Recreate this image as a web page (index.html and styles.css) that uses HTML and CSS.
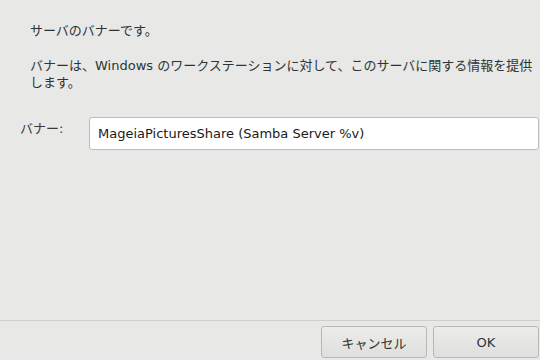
FILE: index.html
```html
<!DOCTYPE html>
<html lang="ja">
<head>
<meta charset="utf-8">
<link rel="stylesheet" href="styles.css">
</head>
<body>
<div class="dialog">
  <div class="content">
    <p class="intro">サーバのバナーです。</p>
    <p class="desc">バナーは、Windows のワークステーションに対して、このサーバに関する情報を提供します。</p>
    <div class="field">
      <label class="label">バナー:</label>
      <div class="input">MageiaPicturesShare (Samba Server %v)</div>
    </div>
  </div>
  <div class="footer">
    <button class="btn">キャンセル</button>
    <button class="btn">OK</button>
  </div>
</div>
</body>
</html>
```
FILE: styles.css
```css
html, body {
  margin: 0;
  padding: 0;
  background: #e8e8e7;
}
body {
  width: 540px;
  height: 360px;
  overflow: hidden;
  font-family: "DejaVu Sans", "Noto Sans CJK JP", sans-serif;
  font-size: 13px;
  color: #2e3436;
}
.dialog {
  display: flex;
  flex-direction: column;
  height: 360px;
}
.content {
  flex: 1;
  padding: 22px 0 0 30px;
}
.intro {
  margin: 0 0 18px 0;
  line-height: 17px;
}
.desc {
  margin: 0;
  line-height: 17px;
  width: 504px;
}
.field {
  display: flex;
  align-items: flex-start;
  margin-top: 26px;
  margin-left: -10px;
  margin-right: 1px;
}
.label {
  width: 69px;
  padding-top: 1px;
  color: #3a3a3a;
}
.input {
  flex: 1;
  box-sizing: border-box;
  height: 33px;
  line-height: 31px;
  padding: 0 8px;
  background: #ffffff;
  border: 1px solid #bdbdbb;
  border-radius: 3px;
  color: #1a1a1a;
  white-space: nowrap;
}
.footer {
  border-top: 1px solid #cfcfcd;
  display: flex;
  justify-content: flex-end;
  align-items: flex-start;
  gap: 6px;
  padding: 5px 1px 0 0;
  box-sizing: border-box;
  height: 40px;
}
.btn {
  width: 106px;
  height: 32px;
  font-family: "DejaVu Sans", "Noto Sans CJK JP", sans-serif;
  font-size: 13px;
  color: #2e3436;
  background: linear-gradient(#ececeb, #dfdfde);
  border: 1px solid #b8b8b6;
  border-radius: 3px;
  padding: 0;
}
```
